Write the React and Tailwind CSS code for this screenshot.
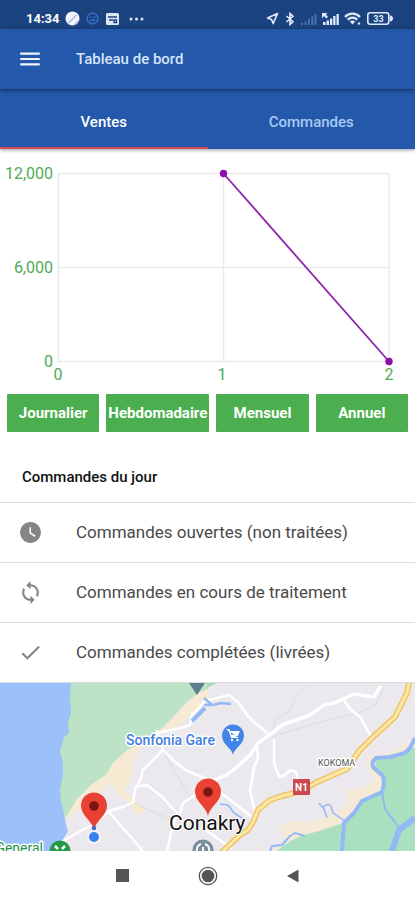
import React, { useState } from 'react';
import { MdMenu, MdWatchLater, MdLoop, MdCheck } from 'react-icons/md';
import clsx from 'clsx';

const TABS = ['Ventes', 'Commandes'];
const PERIODS = ['Journalier', 'Hebdomadaire', 'Mensuel', 'Annuel'];

const ORDER_ROWS = [
    { label: 'Commandes ouvertes (non traitées)', icon: MdWatchLater },
    { label: 'Commandes en cours de traitement', icon: MdLoop },
    { label: 'Commandes complétées (livrées)', icon: MdCheck },
];

// N1 highway, drawn twice (casing + fill)
const HIGHWAY = 'M221 170l19-18 8-5 5-8 5-12 12-10 12-4 20-5 15-9 30-13 12-18 15-15 21-19 7-14 5-10 2-10';

function App() {
    const [tab, setTab] = useState('Ventes');

    return (
        <div className="min-h-screen bg-white font-['Roboto',sans-serif] flex flex-col overflow-x-hidden">
            <StatusBar />

            <header className="relative z-10 h-15 shrink-0 bg-[#2358aa] flex items-center px-4 gap-8 shadow-[0_1px_4px_rgba(0,0,0,0.5)]">
                <button aria-label="Menu" className="w-7 flex justify-center text-[#eef3ff]">
                    <MdMenu className="w-[26px] h-[26px] shrink-0" />
                </button>
                <h1 className="pt-px text-[15px] font-medium text-[#d5e4fb]">Tableau de bord</h1>
            </header>

            <div role="tablist" className="h-15 shrink-0 bg-[#2358aa] flex shadow-[0_1px_4px_rgba(0,0,0,0.4)]">
                {TABS.map((t) => (
                    <button
                        key={t}
                        role="tab"
                        aria-selected={tab === t}
                        onClick={() => setTab(t)}
                        className={clsx(
                            'flex-1 pt-2 text-[15px] font-medium border-b-2',
                            tab === t ? 'text-white border-[#d9485c]' : 'text-[#a9c8f5] border-transparent'
                        )}
                    >
                        {t}
                    </button>
                ))}
            </div>

            <main className="flex-1 flex flex-col">
                <SalesChart />

                <div className="flex gap-[7px] px-[7px]">
                    {PERIODS.map((p) => (
                        <button key={p} className="flex-1 h-[38px] px-[2px] rounded-[1px] bg-[#4bae4f] text-white text-[15px] font-bold">
                            {p}
                        </button>
                    ))}
                </div>

                <h2 className="mt-4 h-[54px] pt-1 px-[22px] flex items-center text-[15px] font-medium text-[#111]">Commandes du jour</h2>
                <ul className="border-b border-[#dcdcdc]">
                    {ORDER_ROWS.map(({ label, icon: Icon }) => (
                        <li key={label} className="h-15 border-t border-[#dcdcdc] flex items-center gap-8 px-4 text-[17px] text-[#4a4a4a]">
                            <span className="w-7 flex justify-center text-[#858585]">
                                <Icon className="w-[25px] h-[25px]" />
                            </span>
                            {label}
                        </li>
                    ))}
                </ul>

                <OrdersMap />
            </main>

            <nav className="h-12 shrink-0 flex items-center justify-center gap-[65px] text-[#555]">
                <button aria-label="Applications récentes">
                    <svg className="w-5 h-5" viewBox="0 0 20 20"><rect x="3" y="3" width="13" height="13" fill="currentColor" /></svg>
                </button>
                <button aria-label="Accueil">
                    <svg className="w-5 h-5" viewBox="0 0 20 20">
                        <circle cx="10" cy="10" r="8.7" fill="none" stroke="currentColor" strokeWidth="1.3" />
                        <circle cx="10" cy="10" r="6.3" fill="currentColor" />
                    </svg>
                </button>
                <button aria-label="Retour">
                    <svg className="w-5 h-5" viewBox="0 0 20 20"><path d="M15.5 3.5v13L4 10z" fill="currentColor" /></svg>
                </button>
            </nav>
        </div>
    );
}

function StatusBar() {
    return (
        <div className="h-[29px] shrink-0 bg-[#1b4380] text-[#dfe9fb] flex items-center justify-between pt-2 pl-[26px] pr-[22px]">
            <div className="flex items-center gap-[5px]">
                <span className="text-[13px] leading-4 font-bold text-white">14:34</span>
                <svg className="w-[15px] h-[15px]" viewBox="0 0 15 15">
                    <circle cx="7.5" cy="7.5" r="7" fill="#f2f4ff" />
                    <path d="M3 12.5 11.5 4M9.5 14 14 9.5" stroke="#7389b5" strokeWidth="1" />
                </svg>
                <svg className="w-[13px] h-[13px] mx-[1px]" viewBox="0 0 13 13" fill="none" stroke="#3d76d3" strokeWidth="1.2">
                    <circle cx="6.5" cy="6.5" r="5.4" />
                    <path d="M3.5 5.2h2M7.5 5.2h2M4 9c1.5-1.4 3.5-1.4 5 0" />
                </svg>
                <svg className="w-[13px] h-[12px] mx-[1px]" viewBox="0 0 13 12">
                    <rect width="13" height="12" rx="1.5" fill="#dfe5f5" />
                    <path d="M2 4h9M3 7h4M8 7h2.5v2.5H8z" stroke="#1b4380" strokeWidth="1.3" fill="none" />
                </svg>
                <svg className="w-[15px] h-[4px] ml-[4px]" viewBox="0 0 15 4" fill="#dfe5f5">
                    <circle cx="2" cy="2" r="1.5" />
                    <circle cx="7.5" cy="2" r="1.5" />
                    <circle cx="13" cy="2" r="1.5" />
                </svg>
            </div>
            <div className="flex items-center gap-[3px]">
                <svg className="w-[13px] h-[13px]" viewBox="0 0 13 13" fill="none" stroke="currentColor" strokeWidth="1.7" strokeLinejoin="round">
                    <path d="M11.5 1.5 1.5 6l4 1.5 1.7 4z" />
                </svg>
                <svg className="w-[10px] h-[14px] mx-[3px]" viewBox="0 0 10 14" fill="none" stroke="currentColor" strokeWidth="1.6">
                    <path d="M1.5 4 8 9.700 5 12.500V1.500L8 4.300 1.500 10" />
                </svg>
                <svg className="w-4 h-3" viewBox="0 0 16 12" fill="#4c70aa">
                    <path d="M0 10h2v2H0zM3.5 8.5h2V12h-2zM7 6h2v6H7zM10.3 3.5h2V12h-2zM13.5 1h2v11h-2z" />
                </svg>
                <svg className="w-[17px] h-3 ml-[2px]" viewBox="0 0 17 12" fill="currentColor">
                    <path d="M0 0h5.5L4 1.5 6 4 4.3 5.5 2 3 0 5.5zM1 9h2.5v3H1zM4.5 7.5H7V12H4.5zM8 5.5h2.3V12H8zM11.2 3h2.3v9h-2.3zM14.5 1h2.3v11h-2.3z" />
                </svg>
                <svg className="w-[17px] h-[13px] ml-[2px]" viewBox="0 0 17 13" fill="none" stroke="currentColor" strokeWidth="2.2">
                    <path d="M1 5c4-4.5 11-4.5 15 0M3.7 7.7c2.7-2.8 6.9-2.8 9.6 0" />
                    <path d="M5.8 9.5 8.5 12.5l2.7-3c-1.5-1.5-3.9-1.5-5.4 0z" fill="currentColor" stroke="none" />
                    <circle cx="15" cy="11.5" r="1.2" fill="currentColor" stroke="none" />
                </svg>
                <svg className="w-[26px] h-[13px] ml-[3px]" viewBox="0 0 26 13">
                    <rect x="0.8" y="0.8" width="21" height="11.4" rx="2.5" fill="none" stroke="currentColor" strokeWidth="1.6" />
                    <path d="M23 3.5c2 0 3 1.5 3 3s-1 3-3 3z" fill="currentColor" />
                    <text x="11.5" y="9.8" textAnchor="middle" fontSize="9" fontWeight="700" fill="currentColor">33</text>
                </svg>
            </div>
        </div>
    );
}

function SalesChart() {
    return (
        <svg className="w-full" viewBox="0 0 415 245" role="img" aria-label="Ventes">
            <g stroke="#ebebeb" strokeWidth="1.5" fill="none">
                <path d="M58.5 24.5h330.5v188H58.5zM58.5 118.5h330.5M223.5 24.5v188" />
            </g>
            <g fill="#4faa55" fontSize="16">
                <text x="53" y="30" textAnchor="end">12,000</text>
                <text x="53" y="124" textAnchor="end">6,000</text>
                <text x="53" y="218" textAnchor="end">0</text>
                <text x="58" y="231" textAnchor="middle">0</text>
                <text x="222" y="231" textAnchor="middle">1</text>
                <text x="389" y="231" textAnchor="middle">2</text>
            </g>
            <path d="M223.5 24.5 389 212.5" stroke="#8e24aa" strokeWidth="1.8" />
            <circle cx="223.5" cy="24.5" r="3.7" fill="#8e0fa8" />
            <circle cx="389" cy="212.5" r="3.7" fill="#8e0fa8" />
        </svg>
    );
}

function MapPin({ x, y }) {
    return (
        <g transform={`translate(${x} ${y})`}>
            <path d="M0 0c-1.5-9-13-14-13-24.5a13 13 0 0 1 26 0C13-14 1.5-9 0 0z" fill="#e94235" />
            <circle cy="-24" r="4.8" fill="#7d1410" />
        </g>
    );
}

function OrdersMap() {
    return (
        <svg className="w-full" viewBox="0 0 415 168" role="img" aria-label="Carte de Conakry">
            <rect width="415" height="168" fill="#ebe9ed" />
            {/* beach */}
            <path d="M208 0v16l-16 14-12 13-20 8-20 14-5 8-2 14-14 6-12 12-22 18-20 14-5-8 80-84z" fill="#f6ead6" />
            <path d="M118 88l10-4 4 8-8 16 10 8 10 10-1 5-8-1-4-10-12-8-7-10z" fill="#f6ead0" />
            {/* sea and green belt */}
            <path d="M71 0h137v6l-10 4-12 10-11 12-15 15-14 10-20 11-14 13-6 11-14 9-14 14-13 20-12-8-8-40z" fill="#bce3c5" />
            <path d="M0 0h71l-1 14 1 16-3 10 1 10-5 4-4 14 3 12v12l-3 14 1 12 4 18 1 6 2 6-6 10-6 10H0z" fill="#9cc0fa" />
            {/* south east marsh */}
            <path d="M415 55L385 72L367 72L366 84L374 96L366 104L345 108L350 118L336 130L308 140L296 137L280 142L282 153L290 160L270 168L415 168z" fill="#f5ead8" />
            <path d="M415 64l-14 9-24 3-2 8 9 10-1 14-20 11-8 12-12 9-24 8-18 5-10 5-8 5-6 5h138z" fill="#aadfc0" />
            <path d="M207 0h10l-10 5z" fill="#a5dcb5" />

            {/* minor boundaries */}
            <g fill="none" stroke="#dbdadf" strokeWidth="1">
                <path d="M310 0l-14 14-6 14-14 8-4 14M272 54l34-11 22-6 34-8 14-8 8-16M163 68l30 52M112 128l20-9 44 20" />
            </g>
            <g fill="none" stroke="#fff" strokeWidth="2.5" strokeLinejoin="round" strokeLinecap="round">
                <path d="M157 48l6 19-20 20-2 8-6 12-2 12-10 5-14 4-14 12-32 18" />
                <path d="M157 50l20-4 13-4 2-10 13-14 24-6 10 8 8 12 8 8 15 12" />
                <path d="M163 67l12 12 12 9 20 8M135 104l12-2 14 11 16 17-5 16-5 22M110 130l33 38M195 112l-12 8-4 14" />
                <path d="M344 17l6 9 10 8 10 18M274 57v23l5 14 6-2 5-5 6 2 2 8M257 64l1 12-4 8-2 14-2 9 5 23M220 109l32 25M207 148l24 17" />
                <path d="M207 100l20-8 10-8 13-12 8-12 14-10 10-8 28-10 14-10 10-2 20-9 20 3 6-10" strokeWidth="3.5" />
            </g>
            {/* rivers */}
            <g fill="none" stroke="#93b9f5" strokeLinejoin="round">
                <path d="M192 38l13-13" strokeWidth="4" />
                <path d="M204 22h9l8-2 10 1M204 15l8 7" strokeWidth="2.5" />
                <path d="M415 55l-5 10-5 5-15 4-14 1q-6 6-2 10l9 8q2 8-1 16l-20 9-8 12-10 10-2 28" strokeWidth="4" />
                <path d="M415 135l-16 12-7 21" strokeWidth="6" />
                <path d="M382 110l3 16 15 20M270 168l2-5 10-1 8-9 5-3 10 3" strokeWidth="2" />
                <path d="M319 120l5 6 3 9M322 125q6-6 9-2l2 7 12 8M220 121l8 1 6 8 8 5" strokeWidth="1.5" />
            </g>
            <g fill="none" strokeLinejoin="round">
                <path d={HIGHWAY} stroke="#efc462" strokeWidth="6" />
                <path d={HIGHWAY} stroke="#fbe6a8" strokeWidth="3" />
            </g>
            <rect x="293" y="96" width="17" height="16" rx="1" fill="#cb4850" />
            <text x="301.5" y="108" textAnchor="middle" fontSize="10" fontWeight="700" fill="#fff">N1</text>

            <path d="M189 0h16l-8 12z" fill="#607d8b" />

            <g stroke="#fff" strokeWidth="3" strokeLinejoin="round" paintOrder="stroke">
                <text x="126" y="62" fontSize="14" fontWeight="500" fill="#3f80e0">Sonfonia Gare</text>
                <text x="318" y="83" fontSize="9" fill="#555">KOKOMA</text>
                <text x="43" y="170" textAnchor="end" fontSize="14" fill="#1e9448">General</text>
            </g>

            <path d="M233 72c-1-7-11-10-11-19.5a11 11 0 0 1 22 0C244 62 234 65 233 72z" fill="#4285e8" />
            <path d="M226.5 46.5h2.5l2.5 8h6.5M229.5 48.5h9.5l-1.5 4h-6.5z" fill="#fff" stroke="#fff" strokeWidth="1.2" />
            <circle cx="232" cy="57" r="1.2" fill="#fff" />
            <circle cx="237.5" cy="57" r="1.2" fill="#fff" />

            <circle cx="60" cy="168" r="10.5" fill="#22994b" />
            <path d="M55 163l3 3M65 163l-3 3" stroke="#fff" strokeWidth="2.5" />
            <circle cx="203" cy="167" r="10.5" fill="#78909c" />
            <path d="M197 168a6 6 0 0 1 4-7M205 161a6 6 0 0 1 4 7M203 164v5" stroke="#fff" strokeWidth="2" fill="none" />

            <circle cx="94" cy="154" r="7" fill="#fff" opacity="0.5" />
            <circle cx="94" cy="154" r="5" fill="#3b82f0" />
            <MapPin x={94} y={147} />
            <circle cx="94" cy="145" r="2.2" fill="#3f66c0" />
            <MapPin x={208} y={133} />
            <text x="169" y="147" fontSize="21" fill="#111" stroke="#fff" strokeWidth="2" paintOrder="stroke">Conakry</text>
        </svg>
    );
}

export default App;
